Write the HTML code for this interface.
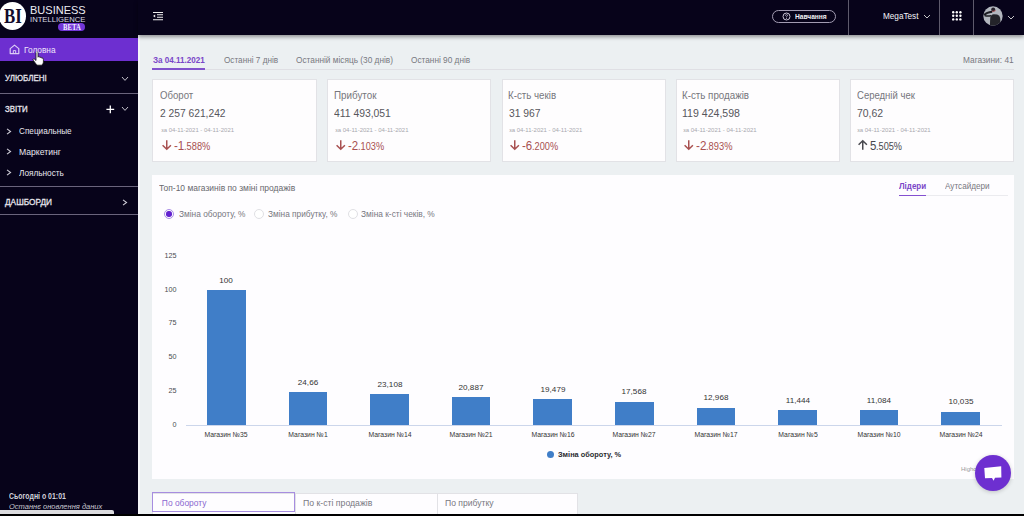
<!DOCTYPE html>
<html><head><meta charset="utf-8">
<style>
*{margin:0;padding:0;box-sizing:border-box}
html,body{width:1024px;height:516px;overflow:hidden;background:#000}
body{position:relative;font-family:"Liberation Sans",sans-serif}
.a{position:absolute;white-space:nowrap;line-height:1}
svg.a{overflow:visible}
#side{position:absolute;left:0;top:0;width:138px;height:514px;background:#07031a}
#main{position:absolute;left:138px;top:0;width:886px;height:514px;background:#ecf0f2}
#hdr{position:absolute;left:138px;top:0;width:886px;height:35px;background:#07031a;box-shadow:0 1.5px 4px rgba(0,0,0,.4)}
.vl{position:absolute;top:0;width:1px;height:35px;background:#5e5a6c}
.hl{position:absolute;left:0;width:138px;height:1px;background:#6a647c}
.card{position:absolute;top:79px;width:164.5px;height:82.5px;background:#fefdfe;border:1px solid #e2e2e6}
</style></head><body>
<div id="main"></div>
<div class="a" style="left:138px;top:35px;width:2.2px;height:479px;background:#f6f7f9"></div>
<div id="side">
  <div class="a" style="left:-1.5px;top:2.2px;width:27.4px;height:27.8px;border-radius:50%;background:#fff"></div>
  <div class="a" style="left:58.2px;top:23px;width:26.8px;height:7.7px;border-radius:4px;background:#7236d8"></div>
  <div class="a" style="left:0;top:38px;width:138px;height:23.4px;background:#6d2fd0"></div>
  <svg class="a" style="left:9px;top:44px" width="11" height="11" viewBox="0 0 11 11"><path d="M1.2 4.6 L5.5 1.1 L9.8 4.6 V9.6 H1.2 Z" fill="none" stroke="#dccdf6" stroke-width="1.2" stroke-linejoin="round"/><path d="M4.3 9.6 V6.6 H6.7 V9.6" fill="none" stroke="#dccdf6" stroke-width="1"/></svg>
  <svg class="a" style="left:121px;top:75.8px" width="8" height="6" viewBox="0 0 8 6"><path d="M1 1 L4 4.4 L7 1" fill="none" stroke="#c4c2cc" stroke-width="1"/></svg>
  <div class="hl" style="top:93px"></div>
  <svg class="a" style="left:105.5px;top:105px" width="9" height="9" viewBox="0 0 9 9"><path d="M4.3 0.4 V8.2 M0.4 4.3 H8.2" fill="none" stroke="#fff" stroke-width="1.3"/></svg>
  <svg class="a" style="left:121px;top:106px" width="8" height="6" viewBox="0 0 8 6"><path d="M1 1 L4 4.4 L7 1" fill="none" stroke="#c4c2cc" stroke-width="1"/></svg>
  <svg class="a" style="left:6px;top:128px" width="6" height="7" viewBox="0 0 6 7"><path d="M1 0.8 L4.6 3.5 L1 6.2" fill="none" stroke="#d2d0da" stroke-width="1.05"/></svg>
  <svg class="a" style="left:6px;top:148.3px" width="6" height="7" viewBox="0 0 6 7"><path d="M1 0.8 L4.6 3.5 L1 6.2" fill="none" stroke="#d2d0da" stroke-width="1.05"/></svg>
  <svg class="a" style="left:6px;top:168.8px" width="6" height="7" viewBox="0 0 6 7"><path d="M1 0.8 L4.6 3.5 L1 6.2" fill="none" stroke="#d2d0da" stroke-width="1.05"/></svg>
  <div class="hl" style="top:186px"></div>
  <svg class="a" style="left:122.3px;top:198.8px" width="6" height="7" viewBox="0 0 6 7"><path d="M1 0.8 L4.6 3.5 L1 6.2" fill="none" stroke="#d2d0da" stroke-width="1.05"/></svg>
  <div class="hl" style="top:214px"></div>
  <div class="a" style="left:0;top:509.5px;width:114px;height:4.5px;background:#dcdcdf;border-radius:0 2px 0 0"></div>
</div>
<svg class="a" style="left:31px;top:51px" width="14" height="15" viewBox="0 0 14 15"><path d="M5 1.6 Q5 0.6 6 0.6 Q7 0.6 7 1.6 V6.2 Q7.4 5.5 8.2 5.6 Q9 5.8 9 6.6 Q9.4 6.1 10.2 6.3 Q10.9 6.6 10.9 7.3 Q11.3 7 11.9 7.2 Q12.5 7.5 12.4 8.6 V11.2 Q12.2 13.2 10.6 14.2 H6.6 Q5.6 13.8 4.6 12.4 L2.2 9.2 Q1.7 8.4 2.3 8 Q2.9 7.6 3.6 8.2 L5 9.5 Z" fill="#fff" stroke="#111" stroke-width="0.8" stroke-linejoin="round"/></svg>
<div id="hdr">
  <svg class="a" style="left:14px;top:0px" width="12" height="24" viewBox="0 0 12 24"><path d="M1 12.5 H11 M5 14.8 H11 M5 17.2 H11 M1 19.8 H11" stroke="#eee" stroke-width="1.1"/><path d="M1 16 L3.2 14.6 V17.4 Z" fill="#eee"/></svg>
  <div class="a" style="left:634.4px;top:9.6px;width:63.6px;height:13.4px;border:1.2px solid #a29cb2;border-radius:7px"></div>
  <svg class="a" style="left:643.6px;top:11.6px" width="9" height="9" viewBox="0 0 9 9"><circle cx="4.5" cy="4.5" r="3.5" fill="none" stroke="#c8c4d4" stroke-width="1"/><path d="M3.4 3.7 Q3.5 2.6 4.5 2.6 Q5.6 2.6 5.5 3.6 Q5.4 4.3 4.5 4.7 V5.3" fill="none" stroke="#c8c4d4" stroke-width="0.8"/><circle cx="4.5" cy="6.4" r="0.5" fill="#c8c4d4"/></svg>
  <div class="vl" style="left:710px"></div>
  <svg class="a" style="left:784.5px;top:14px" width="8" height="5" viewBox="0 0 8 5"><path d="M1 1 L4 4 L7 1" fill="none" stroke="#ddd" stroke-width="0.9"/></svg>
  <div class="vl" style="left:801px"></div>
  <svg class="a" style="left:813.6px;top:11.2px" width="10" height="10" viewBox="0 0 10 10"><g fill="#fff"><circle cx="1.20" cy="1.20" r="1.2"/><circle cx="4.80" cy="1.20" r="1.2"/><circle cx="8.40" cy="1.20" r="1.2"/><circle cx="1.20" cy="4.80" r="1.2"/><circle cx="4.80" cy="4.80" r="1.2"/><circle cx="8.40" cy="4.80" r="1.2"/><circle cx="1.20" cy="8.40" r="1.2"/><circle cx="4.80" cy="8.40" r="1.2"/><circle cx="8.40" cy="8.40" r="1.2"/></g></svg>
  <div class="vl" style="left:835px"></div>
  <svg class="a" style="left:845px;top:6.4px" width="20" height="20" viewBox="0 0 20 20"><defs><clipPath id="avc"><circle cx="10" cy="10" r="9.7"/></clipPath></defs><circle cx="10" cy="10" r="9.7" fill="#b2b6be"/><g clip-path="url(#avc)"><path d="M6.8 20 L7.3 11.5 Q7.8 8.6 10.8 8.2 L14.2 8.5 Q16.8 9.3 17.2 12 L17.6 20 Z" fill="#24242a"/><path d="M1.2 9.2 Q3.5 6.4 9.2 5.8" stroke="#1c1c22" stroke-width="2" fill="none"/><path d="M1.6 9.6 Q5 10.6 8.2 9.6" stroke="#1c1c22" stroke-width="1.5" fill="none"/><circle cx="10.2" cy="3.6" r="2" fill="#26202a"/><path d="M9 5.2 Q10.5 5.6 12.6 4.6" stroke="#b04a4a" stroke-width="0.9" fill="none"/></g></svg>
  <svg class="a" style="left:868.5px;top:15px" width="8" height="5" viewBox="0 0 8 5"><path d="M1 1 L4 4 L7 1" fill="none" stroke="#ddd" stroke-width="0.9"/></svg>
</div>
<div class="a" style="left:152px;top:69px;width:862px;height:1px;background:#dfdfe4"></div>
<div class="a" style="left:152.3px;top:68px;width:52.5px;height:2px;background:#8152cc"></div>
<div class="card" style="left:152.4px"></div>
<div class="card" style="left:326.9px"></div>
<div class="card" style="left:501.5px"></div>
<div class="card" style="left:675.5px"></div>
<div class="card" style="left:849.8px"></div>
<div class="a" style="left:152.2px;top:175.4px;width:862px;height:303.4px;background:#fefdff"></div>
<div class="a" style="left:899px;top:195px;width:109px;height:1px;background:#ebebef"></div>
<div class="a" style="left:899px;top:194.6px;width:27px;height:1.3px;background:#8450d0"></div>
<div class="a" style="left:152px;top:493px;width:426.2px;height:30px;background:#fefdff;border:1px solid #e2e2e6"></div>
<div class="a" style="left:152px;top:492.4px;width:143px;height:19.2px;border:1px solid #a78de0"></div>
<div class="a" style="left:295px;top:493px;width:1px;height:24px;background:#e2e2e6"></div>
<div class="a" style="left:436.5px;top:493px;width:1px;height:24px;background:#e2e2e6"></div>
<div class="a" style="left:163.9px;top:209px;width:10px;height:10px;border-radius:50%;border:1px solid #ab8ee6;background:#fff"></div>
<div class="a" style="left:166.20000000000002px;top:211.3px;width:5.4px;height:5.4px;border-radius:50%;background:#6322d0"></div>
<div class="a" style="left:254px;top:209px;width:10px;height:10px;border-radius:50%;border:1px solid #e0e0e4;background:#fff"></div>
<div class="a" style="left:347.8px;top:209px;width:10px;height:10px;border-radius:50%;border:1px solid #e0e0e4;background:#fff"></div>
<div class="a" style="right:847.4px;top:251.88px;font-size:7.2px;color:#4a4a50">125</div>
<div class="a" style="right:847.4px;top:285.68px;font-size:7.2px;color:#4a4a50">100</div>
<div class="a" style="right:847.4px;top:319.48px;font-size:7.2px;color:#4a4a50">75</div>
<div class="a" style="right:847.4px;top:353.28px;font-size:7.2px;color:#4a4a50">50</div>
<div class="a" style="right:847.4px;top:387.08px;font-size:7.2px;color:#4a4a50">25</div>
<div class="a" style="right:847.4px;top:420.88px;font-size:7.2px;color:#4a4a50">0</div>
<div class="a" style="left:185.5px;top:425px;width:816px;height:1px;background:#ccd6eb"></div>
<div class="a" style="left:207.05px;top:290.30px;width:38.5px;height:135.00px;background:#407ec8"></div>
<div class="a" style="left:186.30px;width:80px;text-align:center;top:277.00px;font-size:7.4px;color:#333;transform:scaleX(1.1)">100</div>
<div class="a" style="left:186.30px;width:80px;text-align:center;top:430.91px;font-size:7.2px;color:#333;transform:scaleX(0.95)">Магазин №35</div>
<div class="a" style="left:288.65px;top:392.01px;width:38.5px;height:33.29px;background:#407ec8"></div>
<div class="a" style="left:267.90px;width:80px;text-align:center;top:379.00px;font-size:7.4px;color:#333;transform:scaleX(1.1)">24,66</div>
<div class="a" style="left:267.90px;width:80px;text-align:center;top:430.91px;font-size:7.2px;color:#333;transform:scaleX(0.95)">Магазин №1</div>
<div class="a" style="left:370.25px;top:394.10px;width:38.5px;height:31.20px;background:#407ec8"></div>
<div class="a" style="left:349.50px;width:80px;text-align:center;top:381.00px;font-size:7.4px;color:#333;transform:scaleX(1.1)">23,108</div>
<div class="a" style="left:349.50px;width:80px;text-align:center;top:430.91px;font-size:7.2px;color:#333;transform:scaleX(0.95)">Магазин №14</div>
<div class="a" style="left:451.85px;top:397.10px;width:38.5px;height:28.20px;background:#407ec8"></div>
<div class="a" style="left:431.10px;width:80px;text-align:center;top:384.00px;font-size:7.4px;color:#333;transform:scaleX(1.1)">20,887</div>
<div class="a" style="left:431.10px;width:80px;text-align:center;top:430.91px;font-size:7.2px;color:#333;transform:scaleX(0.95)">Магазин №21</div>
<div class="a" style="left:533.45px;top:399.00px;width:38.5px;height:26.30px;background:#407ec8"></div>
<div class="a" style="left:512.70px;width:80px;text-align:center;top:386.00px;font-size:7.4px;color:#333;transform:scaleX(1.1)">19,479</div>
<div class="a" style="left:512.70px;width:80px;text-align:center;top:430.91px;font-size:7.2px;color:#333;transform:scaleX(0.95)">Магазин №16</div>
<div class="a" style="left:615.05px;top:401.58px;width:38.5px;height:23.72px;background:#407ec8"></div>
<div class="a" style="left:594.30px;width:80px;text-align:center;top:388.00px;font-size:7.4px;color:#333;transform:scaleX(1.1)">17,568</div>
<div class="a" style="left:594.30px;width:80px;text-align:center;top:430.91px;font-size:7.2px;color:#333;transform:scaleX(0.95)">Магазин №27</div>
<div class="a" style="left:696.65px;top:407.79px;width:38.5px;height:17.51px;background:#407ec8"></div>
<div class="a" style="left:675.90px;width:80px;text-align:center;top:394.00px;font-size:7.4px;color:#333;transform:scaleX(1.1)">12,968</div>
<div class="a" style="left:675.90px;width:80px;text-align:center;top:430.91px;font-size:7.2px;color:#333;transform:scaleX(0.95)">Магазин №17</div>
<div class="a" style="left:778.25px;top:409.85px;width:38.5px;height:15.45px;background:#407ec8"></div>
<div class="a" style="left:757.50px;width:80px;text-align:center;top:397.00px;font-size:7.4px;color:#333;transform:scaleX(1.1)">11,444</div>
<div class="a" style="left:757.50px;width:80px;text-align:center;top:430.91px;font-size:7.2px;color:#333;transform:scaleX(0.95)">Магазин №5</div>
<div class="a" style="left:859.85px;top:410.34px;width:38.5px;height:14.96px;background:#407ec8"></div>
<div class="a" style="left:839.10px;width:80px;text-align:center;top:397.00px;font-size:7.4px;color:#333;transform:scaleX(1.1)">11,084</div>
<div class="a" style="left:839.10px;width:80px;text-align:center;top:430.91px;font-size:7.2px;color:#333;transform:scaleX(0.95)">Магазин №10</div>
<div class="a" style="left:941.45px;top:411.75px;width:38.5px;height:13.55px;background:#407ec8"></div>
<div class="a" style="left:920.70px;width:80px;text-align:center;top:398.00px;font-size:7.4px;color:#333;transform:scaleX(1.1)">10,035</div>
<div class="a" style="left:920.70px;width:80px;text-align:center;top:430.91px;font-size:7.2px;color:#333;transform:scaleX(0.95)">Магазин №24</div>
<div class="a" style="left:546.6px;top:450.7px;width:7px;height:7px;border-radius:50%;background:#407ec8"></div>
<div class="a" style="left:961px;top:465.5px;font-size:6px;color:#999">Highcharts.com</div>
<div class="a" style="left:173.64px;top:139.82px;font-size:12.5px;color:#a85050;transform:scaleX(0.9268);transform-origin:0 0;">-1</div>
<div class="a" style="left:183.94px;top:141.94px;font-size:10.0px;color:#a85050;transform:scaleX(0.9268);transform-origin:0 0;">.588%</div>
<svg class="a" style="left:161.5px;top:140px" width="10" height="10" viewBox="0 0 10 10"><path d="M4.75 0.3 V9.2 M0.6 5.2 L4.75 9.2 L8.9 5.2" fill="none" stroke="#a85050" stroke-width="1.5"/></svg>
<div class="a" style="left:347.94px;top:139.82px;font-size:12.5px;color:#a85050;transform:scaleX(0.9190);transform-origin:0 0;">-2</div>
<div class="a" style="left:358.16px;top:141.94px;font-size:10.0px;color:#a85050;transform:scaleX(0.9190);transform-origin:0 0;">.103%</div>
<svg class="a" style="left:335.7px;top:140px" width="10" height="10" viewBox="0 0 10 10"><path d="M4.75 0.3 V9.2 M0.6 5.2 L4.75 9.2 L8.9 5.2" fill="none" stroke="#a85050" stroke-width="1.5"/></svg>
<div class="a" style="left:521.94px;top:139.82px;font-size:12.5px;color:#a85050;transform:scaleX(0.9190);transform-origin:0 0;">-6</div>
<div class="a" style="left:532.16px;top:141.94px;font-size:10.0px;color:#a85050;transform:scaleX(0.9190);transform-origin:0 0;">.200%</div>
<svg class="a" style="left:509.9px;top:140px" width="10" height="10" viewBox="0 0 10 10"><path d="M4.75 0.3 V9.2 M0.6 5.2 L4.75 9.2 L8.9 5.2" fill="none" stroke="#a85050" stroke-width="1.5"/></svg>
<div class="a" style="left:695.93px;top:139.82px;font-size:12.5px;color:#a85050;transform:scaleX(0.9320);transform-origin:0 0;">-2</div>
<div class="a" style="left:706.29px;top:141.94px;font-size:10.0px;color:#a85050;transform:scaleX(0.9320);transform-origin:0 0;">.893%</div>
<svg class="a" style="left:684px;top:140px" width="10" height="10" viewBox="0 0 10 10"><path d="M4.75 0.3 V9.2 M0.6 5.2 L4.75 9.2 L8.9 5.2" fill="none" stroke="#a85050" stroke-width="1.5"/></svg>
<div class="a" style="left:869.94px;top:139.82px;font-size:12.5px;color:#48484e;transform:scaleX(0.9169);transform-origin:0 0;">5</div>
<div class="a" style="left:876.32px;top:141.94px;font-size:10.0px;color:#48484e;transform:scaleX(0.9169);transform-origin:0 0;">.505%</div>
<svg class="a" style="left:858px;top:140px" width="10" height="10" viewBox="0 0 10 10"><path d="M4.75 9.7 V0.8 M0.6 4.8 L4.75 0.8 L8.9 4.8" fill="none" stroke="#48484e" stroke-width="1.5"/></svg>
<div class="a" style="left:3.75px;top:6.00px;font:normal bold 20.763px/1 'Liberation Serif',serif;color:#120a2a;transform:scaleX(0.8090);transform-origin:0 0;">BI</div>
<div class="a" style="left:29.92px;top:5.00px;font:normal normal 11.337px/1 'Liberation Sans',sans-serif;color:#ececf2;transform:scaleX(0.9723);transform-origin:0 0;">BUSINESS</div>
<div class="a" style="left:30.11px;top:16.00px;font:normal normal 7.267px/1 'Liberation Sans',sans-serif;color:#dcdce4;transform:scaleX(1.0555);transform-origin:0 0;">INTELLIGENCE</div>
<div class="a" style="left:62.50px;top:24.00px;font:normal bold 7.328px/1 'Liberation Serif',serif;color:#f4eeff;transform:scaleX(0.9143);transform-origin:0 0;">BETA</div>
<div class="a" style="left:23.73px;top:46.00px;font:normal normal 9.012px/1 'Liberation Sans',sans-serif;color:#efe6fb;transform:scaleX(0.9239);transform-origin:0 0;">Головна</div>
<div class="a" style="left:5.00px;top:74.00px;font:normal normal 9.157px/1 'Liberation Sans',sans-serif;color:#e6e4ec;transform:scaleX(0.8719);transform-origin:0 0;-webkit-text-stroke:0.3px #e6e4ec;">УЛЮБЛЕНІ</div>
<div class="a" style="left:4.96px;top:105.00px;font:normal normal 9.012px/1 'Liberation Sans',sans-serif;color:#e6e4ec;transform:scaleX(0.8734);transform-origin:0 0;-webkit-text-stroke:0.3px #e6e4ec;">ЗВІТИ</div>
<div class="a" style="left:18.99px;top:127.00px;font:normal normal 9.157px/1 'Liberation Sans',sans-serif;color:#e8e6ee;transform:scaleX(0.8946);transform-origin:0 0;">Специальные</div>
<div class="a" style="left:18.71px;top:148.00px;font:normal normal 9.157px/1 'Liberation Sans',sans-serif;color:#e8e6ee;transform:scaleX(0.9435);transform-origin:0 0;">Маркетинг</div>
<div class="a" style="left:19.36px;top:169.00px;font:normal normal 9.157px/1 'Liberation Sans',sans-serif;color:#e8e6ee;transform:scaleX(0.9020);transform-origin:0 0;">Лояльность</div>
<div class="a" style="left:4.96px;top:198.00px;font:normal normal 9.157px/1 'Liberation Sans',sans-serif;color:#e6e4ec;transform:scaleX(0.9055);transform-origin:0 0;-webkit-text-stroke:0.3px #e6e4ec;">ДАШБОРДИ</div>
<div class="a" style="left:8.62px;top:493.00px;font:normal bold 8.140px/1 'Liberation Sans',sans-serif;color:#d2d2da;transform:scaleX(0.8545);transform-origin:0 0;">Сьогодні о 01:01</div>
<div class="a" style="left:8.52px;top:503.00px;font:italic normal 7.703px/1 'Liberation Sans',sans-serif;color:#c8c8d0;transform:scaleX(0.9760);transform-origin:0 0;">Останнє оновлення даних</div>
<div class="a" style="left:794.87px;top:14.00px;font:normal bold 7.122px/1 'Liberation Sans',sans-serif;color:#f0f0f4;transform:scaleX(0.9331);transform-origin:0 0;">Навчання</div>
<div class="a" style="left:882.55px;top:12.00px;font:normal normal 9.302px/1 'Liberation Sans',sans-serif;color:#f4f4f8;transform:scaleX(0.8797);transform-origin:0 0;">MegaTest</div>
<div class="a" style="left:152.54px;top:55.00px;font:normal bold 9.738px/1 'Liberation Sans',sans-serif;color:#7a46c8;transform:scaleX(0.8310);transform-origin:0 0;">За 04.11.2021</div>
<div class="a" style="left:223.63px;top:55.00px;font:normal normal 9.738px/1 'Liberation Sans',sans-serif;color:#78787f;transform:scaleX(0.8423);transform-origin:0 0;">Останні 7 днів</div>
<div class="a" style="left:296.23px;top:55.00px;font:normal normal 9.738px/1 'Liberation Sans',sans-serif;color:#78787f;transform:scaleX(0.8518);transform-origin:0 0;">Останній місяць (30 днів)</div>
<div class="a" style="left:411.43px;top:55.00px;font:normal normal 9.738px/1 'Liberation Sans',sans-serif;color:#78787f;transform:scaleX(0.8501);transform-origin:0 0;">Останні 90 днів</div>
<div class="a" style="left:962.93px;top:55.00px;font:normal normal 9.738px/1 'Liberation Sans',sans-serif;color:#78787f;transform:scaleX(0.8566);transform-origin:0 0;">Магазини: 41</div>
<div class="a" style="left:160.27px;top:90.00px;font:normal normal 10.756px/1 'Liberation Sans',sans-serif;color:#76767c;transform:scaleX(0.8950);transform-origin:0 0;">Оборот</div>
<div class="a" style="left:160.19px;top:108.00px;font:normal normal 10.756px/1 'Liberation Sans',sans-serif;color:#56565c;transform:scaleX(0.9535);transform-origin:0 0;">2 257 621,242</div>
<div class="a" style="left:160.58px;top:127.00px;font:normal normal 6.250px/1 'Liberation Sans',sans-serif;color:#a8a8ae;transform:scaleX(0.9524);transform-origin:0 0;">за 04-11-2021 - 04-11-2021</div>
<div class="a" style="left:333.91px;top:90.00px;font:normal normal 10.756px/1 'Liberation Sans',sans-serif;color:#76767c;transform:scaleX(0.9139);transform-origin:0 0;">Прибуток</div>
<div class="a" style="left:334.49px;top:108.00px;font:normal normal 10.756px/1 'Liberation Sans',sans-serif;color:#56565c;transform:scaleX(0.9639);transform-origin:0 0;">411 493,051</div>
<div class="a" style="left:334.58px;top:127.00px;font:normal normal 6.250px/1 'Liberation Sans',sans-serif;color:#a8a8ae;transform:scaleX(0.9589);transform-origin:0 0;">за 04-11-2021 - 04-11-2021</div>
<div class="a" style="left:508.42px;top:90.00px;font:normal normal 10.756px/1 'Liberation Sans',sans-serif;color:#76767c;transform:scaleX(0.9048);transform-origin:0 0;">К-сть чеків</div>
<div class="a" style="left:508.84px;top:108.00px;font:normal normal 10.756px/1 'Liberation Sans',sans-serif;color:#56565c;transform:scaleX(0.9618);transform-origin:0 0;">31 967</div>
<div class="a" style="left:509.08px;top:127.00px;font:normal normal 6.250px/1 'Liberation Sans',sans-serif;color:#a8a8ae;transform:scaleX(0.9563);transform-origin:0 0;">за 04-11-2021 - 04-11-2021</div>
<div class="a" style="left:682.42px;top:90.00px;font:normal normal 10.756px/1 'Liberation Sans',sans-serif;color:#76767c;transform:scaleX(0.9084);transform-origin:0 0;">К-сть продажів</div>
<div class="a" style="left:682.41px;top:108.00px;font:normal normal 10.756px/1 'Liberation Sans',sans-serif;color:#56565c;transform:scaleX(0.9833);transform-origin:0 0;">119 424,598</div>
<div class="a" style="left:683.08px;top:127.00px;font:normal normal 6.250px/1 'Liberation Sans',sans-serif;color:#a8a8ae;transform:scaleX(0.9615);transform-origin:0 0;">за 04-11-2021 - 04-11-2021</div>
<div class="a" style="left:856.72px;top:90.00px;font:normal normal 10.756px/1 'Liberation Sans',sans-serif;color:#76767c;transform:scaleX(0.8858);transform-origin:0 0;">Середній чек</div>
<div class="a" style="left:856.68px;top:108.00px;font:normal normal 10.756px/1 'Liberation Sans',sans-serif;color:#56565c;transform:scaleX(0.9698);transform-origin:0 0;">70,62</div>
<div class="a" style="left:857.08px;top:127.00px;font:normal normal 6.250px/1 'Liberation Sans',sans-serif;color:#a8a8ae;transform:scaleX(0.9615);transform-origin:0 0;">за 04-11-2021 - 04-11-2021</div>
<div class="a" style="left:158.93px;top:184.00px;font:normal normal 8.576px/1 'Liberation Sans',sans-serif;color:#68686e;transform:scaleX(0.9896);transform-origin:0 0;">Топ-10 магазинів по зміні продажів</div>
<div class="a" style="left:899.00px;top:181.00px;font:normal bold 9.738px/1 'Liberation Sans',sans-serif;color:#7a46c8;transform:scaleX(0.8230);transform-origin:0 0;">Лідери</div>
<div class="a" style="left:945.00px;top:181.00px;font:normal normal 9.738px/1 'Liberation Sans',sans-serif;color:#78787f;transform:scaleX(0.8400);transform-origin:0 0;">Аутсайдери</div>
<div class="a" style="left:178.65px;top:210.00px;font:normal normal 9.302px/1 'Liberation Sans',sans-serif;color:#78787f;transform:scaleX(0.8953);transform-origin:0 0;">Зміна обороту, %</div>
<div class="a" style="left:268.35px;top:210.00px;font:normal normal 9.302px/1 'Liberation Sans',sans-serif;color:#78787f;transform:scaleX(0.8930);transform-origin:0 0;">Зміна прибутку, %</div>
<div class="a" style="left:361.25px;top:210.00px;font:normal normal 9.302px/1 'Liberation Sans',sans-serif;color:#78787f;transform:scaleX(0.8978);transform-origin:0 0;">Зміна к-сті чеків, %</div>
<div class="a" style="left:557.95px;top:451.00px;font:normal bold 7.558px/1 'Liberation Sans',sans-serif;color:#2a2a30;transform:scaleX(0.9774);transform-origin:0 0;">Зміна обороту, %</div>
<div class="a" style="left:161.83px;top:499.00px;font:normal normal 8.430px/1 'Liberation Sans',sans-serif;color:#8a68d0;">По обороту</div>
<div class="a" style="left:303.30px;top:499.00px;font:normal normal 8.430px/1 'Liberation Sans',sans-serif;color:#78787f;transform:scaleX(1.0316);transform-origin:0 0;">По к-сті продажів</div>
<div class="a" style="left:444.81px;top:499.00px;font:normal normal 8.430px/1 'Liberation Sans',sans-serif;color:#78787f;transform:scaleX(1.0192);transform-origin:0 0;">По прибутку</div>
<div class="a" style="left:975px;top:455px;width:36px;height:36px;border-radius:50%;background:#6d2fd0;box-shadow:0 1px 4px rgba(0,0,0,.2)"></div>
<svg class="a" style="left:983px;top:465px" width="20" height="18" viewBox="0 0 20 18"><path d="M1.3 2.9 L18.2 1.2 L18.4 12.4 L12 12.8 L10.6 15.7 L9 13 L2 13.2 Z" fill="#fff"/></svg>
<div class="a" style="left:0;top:514px;width:1024px;height:2px;background:#000"></div>
</body></html>
